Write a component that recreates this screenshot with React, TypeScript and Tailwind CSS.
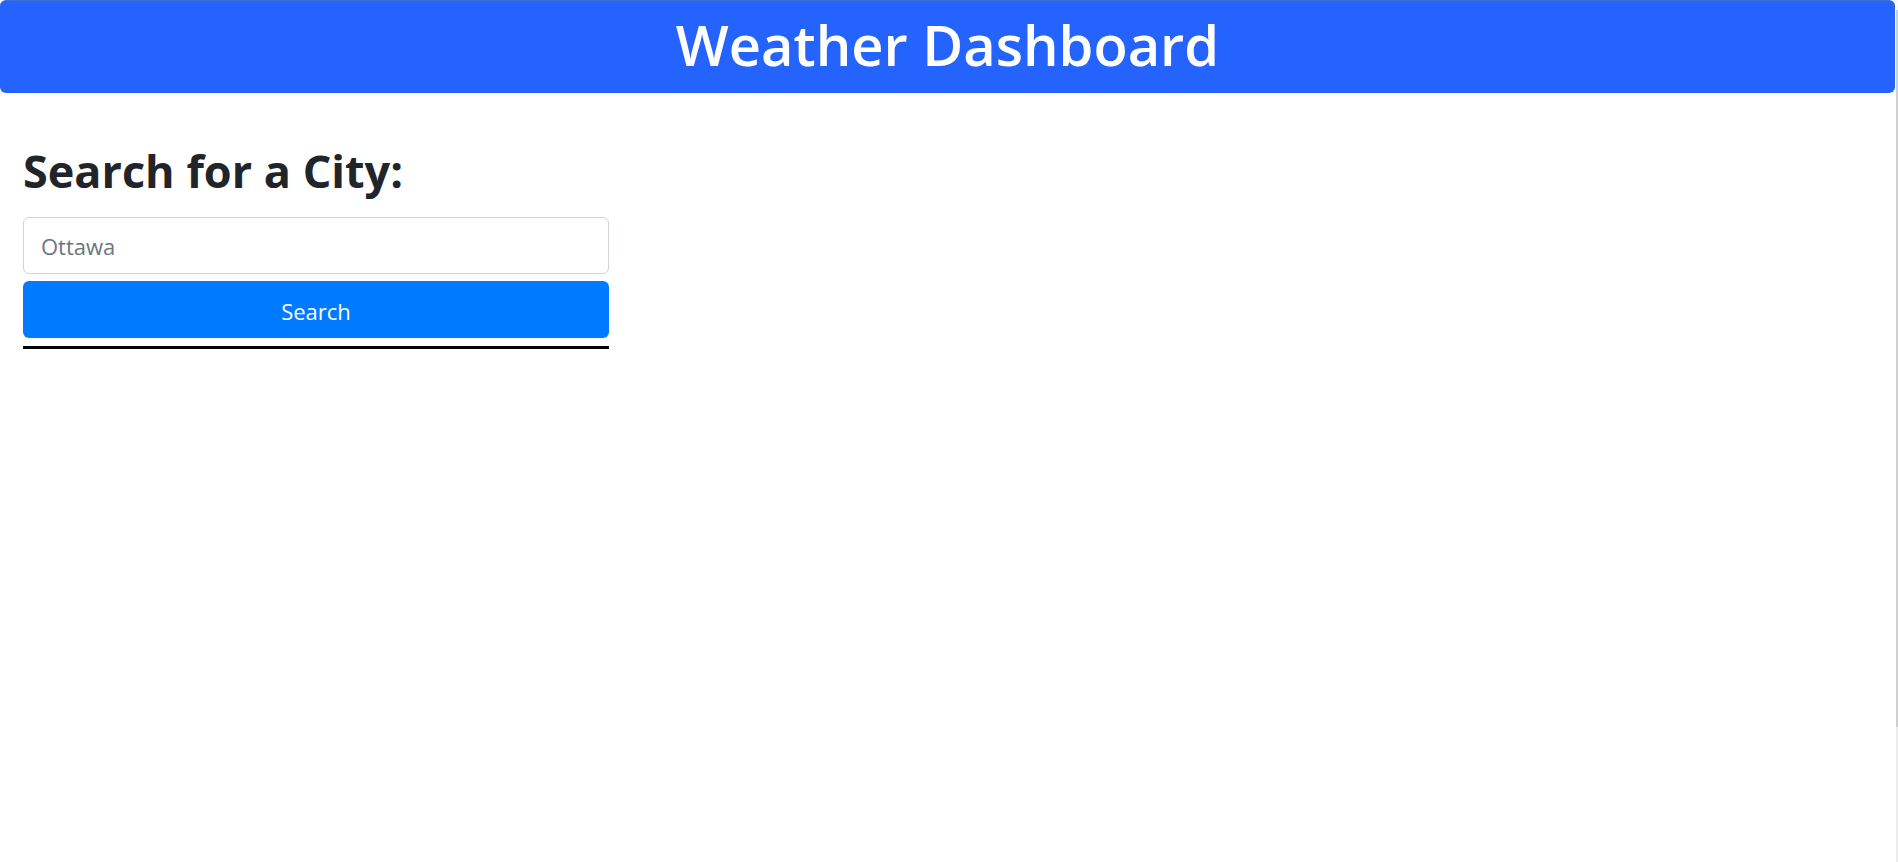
import { useState } from 'react';

export default function App() {
  const [city, setCity] = useState('Ottawa');

  return (
    <div className="flex min-h-screen bg-white font-['Open_Sans',sans-serif]">
      <div className="flex-1">
        {/* header */}
        <header className="flex h-[93px] items-center justify-center rounded-md border-t border-[#3d6fd6] bg-[#2563ff] pb-[6px]">
          <h1 className="text-[56px] leading-none font-semibold text-white">
            Weather Dashboard
          </h1>
        </header>

        {/* search */}
        <section className="w-[632px] px-[23px] pt-[52px]">
          <h2 className="mb-[20px] text-[45px] leading-[52px] font-bold text-[#212529]">
            Search for a City:
          </h2>
          <div className="flex flex-col gap-[7px]">
            <input
              type="text"
              value={city}
              onChange={(e) => setCity(e.target.value)}
              className="h-[57px] w-full rounded-md border border-[#ced4da] bg-white px-[17px] text-[22px] text-[#6c757d] outline-none"
            />
            <button className="h-[57px] w-full rounded-md bg-[#007bff] pt-[3px] text-[22px] text-white">
              Search
            </button>
          </div>
          <hr className="mt-[8px] border-t-[3px] border-black" />
        </section>
      </div>

      {/* scrollbar strip */}
      <div className="flex w-[3px] flex-col pt-[10px]">
        <div className="ml-auto h-[717px] w-[2px] bg-[#cfcfcf]"></div>
        <div className="ml-auto w-[2px] flex-1 bg-[#ececec]"></div>
      </div>
    </div>
  );
}
